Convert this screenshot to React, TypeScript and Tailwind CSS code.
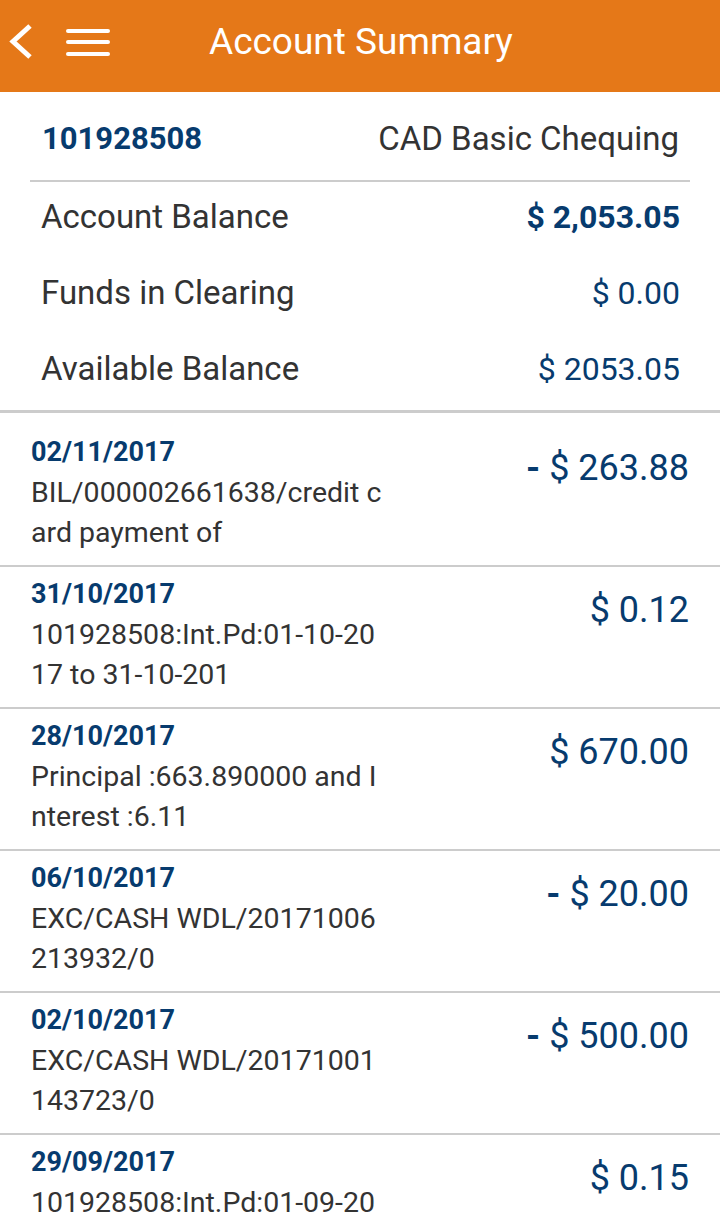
import React from "react"

const summary = [
  { label: "Account Balance", value: "$ 2,053.05", bold: true },
  { label: "Funds in Clearing", value: "$ 0.00", bold: false },
  { label: "Available Balance", value: "$ 2053.05", bold: false },
]

const transactions = [
  { date: "02/11/2017", lines: ["BIL/000002661638/credit c", "ard payment of"], amount: "$ 263.88", debit: true },
  { date: "31/10/2017", lines: ["101928508:Int.Pd:01-10-20", "17 to 31-10-201"], amount: "$ 0.12", debit: false },
  { date: "28/10/2017", lines: ["Principal :663.890000 and I", "nterest :6.11"], amount: "$ 670.00", debit: false },
  { date: "06/10/2017", lines: ["EXC/CASH WDL/20171006", "213932/0"], amount: "$ 20.00", debit: true },
  { date: "02/10/2017", lines: ["EXC/CASH WDL/20171001", "143723/0"], amount: "$ 500.00", debit: true },
  { date: "29/09/2017", lines: ["101928508:Int.Pd:01-09-20"], amount: "$ 0.15", debit: false },
]

export default function App() {
  return (
    <div className="h-[1225px] w-[720px] overflow-hidden bg-white font-['Roboto','Liberation_Sans',sans-serif]">
      {/* Header */}
      <header className="h-[92px] bg-[#e57818] text-white">
        <div className="flex h-[84px] items-center">
          <button className="ml-[8px] flex h-[40px] w-[26px] items-center">
            <svg width="26" height="40" viewBox="0 0 26 40" fill="none">
              <polyline points="22,4 5,19.5 22,35" stroke="white" strokeWidth="5" strokeLinejoin="miter" />
            </svg>
          </button>
          <div className="ml-[32px] flex flex-col gap-[7.5px]">
            <span className="block h-[4px] w-[44px] rounded-full bg-white" />
            <span className="block h-[4px] w-[44px] rounded-full bg-white" />
            <span className="block h-[4px] w-[44px] rounded-full bg-white" />
          </div>
          <h1 className="ml-[99px] text-[37px] leading-[40px] font-normal">Account Summary</h1>
        </div>
      </header>

      {/* Account summary */}
      <section className="px-[30px]">
        <div className="flex h-[88px] items-center justify-between pt-[6px] pl-[12px] pr-[11px]">
          <span className="text-[31px] font-bold text-[#073b6e]">101928508</span>
          <span className="text-[33px] text-[#333333]">CAD Basic Chequing</span>
        </div>
        <div className="h-[2px] bg-[#cccccc]" />
        {summary.map((row) => (
          <div key={row.label} className="flex h-[76px] items-center justify-between pb-[6px] pl-[11px] pr-[10px]">
            <span className="text-[33px] text-[#333333]">{row.label}</span>
            <span className={`text-[32px] text-[#073b6e] ${row.bold ? "font-bold" : "font-normal"}`}>{row.value}</span>
          </div>
        ))}
      </section>

      <div className="h-[3px] bg-[#cccccc]" />

      {/* Transactions */}
      <ul className="pt-[12px]">
        {transactions.map((t) => (
          <li key={t.date} className="flex justify-between border-b-2 border-[#cccccc] px-[31px] pt-[8px] pb-[12px]">
            <div>
              <div className="text-[27px] leading-[38px] font-bold text-[#073b6e]">{t.date}</div>
              <div className="mt-[2px] text-[28.5px] leading-[40px] text-[#333333]">
                {t.lines.map((l) => (
                  <div key={l}>{l}</div>
                ))}
              </div>
            </div>
            <div className="mt-[15px] text-[36px] leading-[40px] text-[#073b6e]">
              {t.debit && <span className="font-bold">- </span>}
              {t.amount}
            </div>
          </li>
        ))}
      </ul>
    </div>
  )
}
